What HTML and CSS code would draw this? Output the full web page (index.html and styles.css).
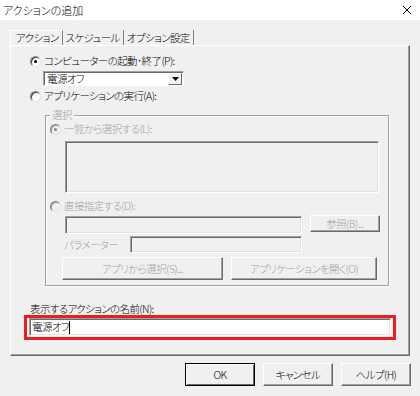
FILE: index.html
```html
<!DOCTYPE html>
<html lang="ja">
<head>
<meta charset="utf-8">
<title>アクションの追加</title>
<link rel="stylesheet" href="styles.css">
</head>
<body>
<div class="titlebar">
  <span class="title">アクションの追加</span>
  <svg class="close" width="10" height="10" viewBox="0 0 10 10"><path d="M1 1 L9 9 M9 1 L1 9" stroke="#000" stroke-width="1" fill="none"/></svg>
</div>
<div class="content">
  <div class="tabs">
    <div class="tab active">アクション</div>
    <div class="tab">スケジュール</div>
    <div class="tab">オプション設定</div>
  </div>
  <div class="panel">
    <div class="opt row1">
      <span class="radio checked"></span><span>コンピューターの起動･終了(P):</span>
    </div>
    <div class="select">
      <span class="select-text">電源オフ</span>
      <span class="select-btn"><svg width="7" height="4" viewBox="0 0 7 4"><path d="M0 0 H7 L3.5 4 Z" fill="#000"/></svg></span>
    </div>
    <div class="opt row2">
      <span class="radio"></span><span>アプリケーションの実行(A):</span>
    </div>
    <div class="group">
      <span class="legend">選択</span>
      <div class="opt dis row3">
        <span class="radio checked disabled"></span><span>一覧から選択する(L):</span>
      </div>
      <div class="listbox"></div>
      <div class="opt dis row4">
        <span class="radio disabled"></span><span>直接指定する(D):</span>
      </div>
      <div class="pathrow">
        <div class="field path"></div>
        <div class="btn dis small">参照(B)...</div>
      </div>
      <div class="paramrow">
        <span class="plabel dis">パラメーター</span>
        <div class="field param"></div>
      </div>
      <div class="btnrow">
        <div class="btn dis b1">アプリから選択(S)...</div>
        <div class="btn dis b2">アプリケーションを開く(O)</div>
      </div>
    </div>
    <div class="namelabel">表示するアクションの名前(N):</div>
    <div class="highlight">
      <div class="namefield"><span class="caret"></span>電源オフ</div>
    </div>
  </div>
  <div class="footer">
    <div class="btn default">OK</div>
    <div class="btn">キャンセル</div>
    <div class="btn">ヘルプ(H)</div>
  </div>
</div>
</body>
</html>
```
FILE: styles.css
```css
* { box-sizing: border-box; }
body {
  margin: 0;
  width: 420px;
  height: 396px;
  overflow: hidden;
  background: #f0f0f0;
  font-family: "Noto Sans CJK JP", sans-serif;
  font-feature-settings: "palt";
  font-size: 10.5px;
  font-weight: 300;
  letter-spacing: -0.6px;
  line-height: 14px;
  color: #000;
}
.titlebar {
  height: 20px;
  background: #fff;
  display: flex;
  align-items: center;
  justify-content: space-between;
  padding: 0 8px 0 3px;
}
.title { font-size: 11px; letter-spacing: 0; }
.content { padding: 10px 10px 0 10px; }
.tabs { display: flex; height: 15px; }
.tab {
  padding: 0 3px 0 3px;
  border-right: 1px solid #808080;
  line-height: 15px;
}
.tab.active {
  padding-left: 5px;
  border-left: 1px solid #fff;
  border-top: 1px solid #fff;
  line-height: 14px;
}
.panel {
  height: 311px;
  width: 400px;
  border: 1px solid;
  border-color: #fff #696969 #696969 #fff;
  box-shadow: inset -1px -1px 0 #a0a0a0;
  padding: 0 0 0 19px;
  display: flex;
  flex-direction: column;
  align-items: flex-start;
}
.opt { display: flex; align-items: center; height: 14px; gap: 3px; }
.row1 { margin-top: 8px; }
.row2 { margin-top: 3px; }
.radio {
  width: 11px;
  height: 11px;
  border-radius: 50%;
  background: #fff;
  border: 1px solid;
  border-color: #808080 #e3e3e3 #e3e3e3 #808080;
  box-shadow: inset 1px 1px 0 #404040;
  position: relative;
  flex: none;
}
.radio.checked::after {
  content: "";
  position: absolute;
  left: 3px; top: 3px;
  width: 3px; height: 3px;
  border-radius: 50%;
  background: #000;
}
.radio.disabled { background: #f0f0f0; box-shadow: inset 1px 1px 0 #a0a0a0; }
.radio.disabled.checked::after { background: #808080; }
.dis { color: #a0a0a0; }
.select {
  margin: 3px 0 0 13px;
  width: 141px;
  height: 15px;
  background: #fff;
  border: 1px solid;
  border-color: #a0a0a0 #fff #fff #a0a0a0;
  box-shadow: inset 1px 1px 0 #696969;
  display: flex;
  align-items: center;
  justify-content: space-between;
  padding: 1px 1px 0 3px;
}
.select-text { line-height: 12px; }
.select-btn {
  width: 14px;
  height: 12px;
  background: #f0f0f0;
  border: 1px solid;
  border-color: #fff #696969 #696969 #fff;
  display: flex;
  align-items: center;
  justify-content: center;
}
.group {
  position: relative;
  margin: 12px 0 0 15px;
  width: 344px;
  height: 171px;
  border: 1px solid #a0a0a0;
  box-shadow: inset 1px 1px 0 #fff, 1px 1px 0 #fff;
  padding: 0 0 0 4px;
  display: flex;
  flex-direction: column;
  align-items: flex-start;
}
.legend {
  position: absolute;
  top: -8px;
  left: 4px;
  padding: 0 2px;
  background: #f0f0f0;
  color: #a0a0a0;
}
.row3 { margin-top: 6px; }
.listbox {
  margin: 5px 0 0 15px;
  width: 314px;
  height: 52px;
  border: 1px solid;
  border-color: #a0a0a0 #fff #fff #a0a0a0;
  box-shadow: inset 1px 1px 0 #696969, inset -1px -1px 0 #e3e3e3;
}
.row4 { margin-top: 6px; }
.pathrow { display: flex; gap: 8px; margin: 2px 0 0 15px; align-items: flex-start; }
.field {
  height: 18px;
  border: 1px solid;
  border-color: #a0a0a0 #fff #fff #a0a0a0;
  box-shadow: inset 1px 1px 0 #696969, inset -1px -1px 0 #e3e3e3;
}
.path { width: 237px; margin-top: 1px; }
.btn {
  height: 23px;
  width: 70px;
  border: 1px solid;
  border-color: #fff #696969 #696969 #fff;
  box-shadow: inset -1px -1px 0 #a0a0a0;
  display: flex;
  align-items: center;
  justify-content: center;
  background: #f0f0f0;
}
.btn.small { height: 17px; }
.paramrow { display: flex; align-items: center; margin: 2px 0 0 14px; }
.plabel { width: 66px; }
.param { width: 172px; height: 17px; }
.btnrow { display: flex; gap: 8px; margin: 4px 0 0 12px; }
.b1 { width: 161px; }
.b2 { width: 146px; }
.namelabel { margin: 17px 0 0 0; height: 12px; line-height: 12px; }
.highlight {
  margin: 0 0 0 -6px;
  width: 372px;
  height: 25px;
  border: 3px solid #ec1c24;
  padding: 0 2px 1px 2px;
}
.namefield {
  height: 18px;
  background: #fff;
  border: 1px solid;
  border-color: #a0a0a0 #fff #fff #a0a0a0;
  box-shadow: inset 1px 1px 0 #696969, inset -1px -1px 0 #e3e3e3;
  display: flex;
  align-items: center;
  padding-left: 2px;
  line-height: 14px;
}
.caret { width: 1px; height: 13px; background: #000; order: 2; }
.footer { display: flex; justify-content: flex-end; gap: 8px; margin: 7px -1px 0 0; }
.default { border-color: #000; box-shadow: inset 1px 1px 0 #fff, inset -1px -1px 0 #696969; }
```
